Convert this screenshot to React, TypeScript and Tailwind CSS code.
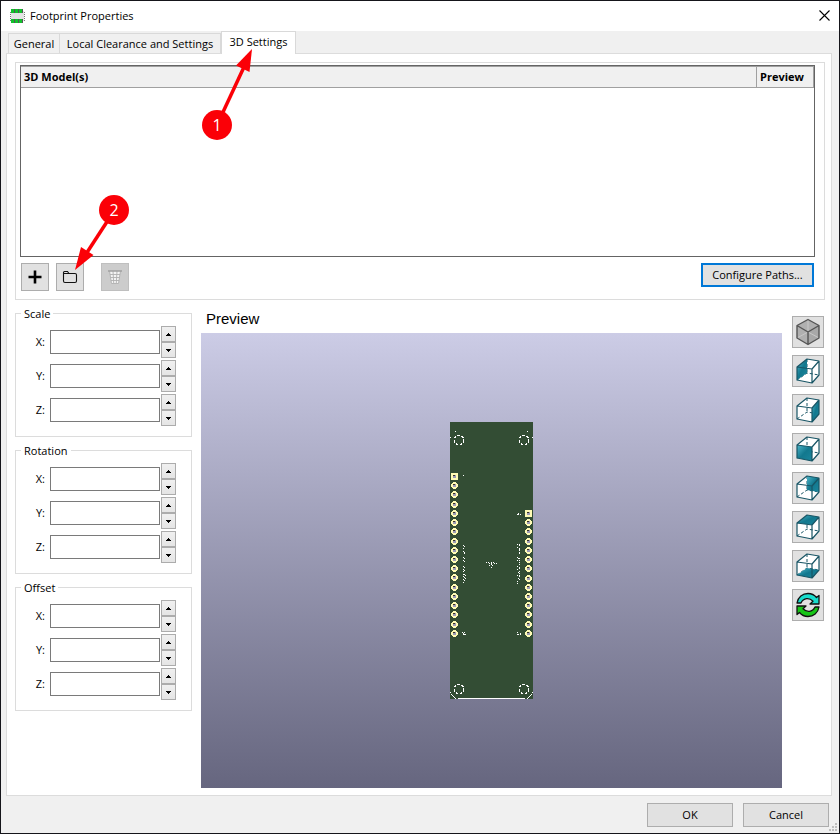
import React from "react";

type Point = [number, number];

const FTL: Point = [5, 12];
const FTR: Point = [20, 14];
const FBR: Point = [20, 28];
const FBL: Point = [5, 25];
const BTL: Point = [15, 4];
const BTR: Point = [27, 6];
const BBR: Point = [27, 20];
const BBL: Point = [15, 18];

const faces: Record<string, Point[]> = {
  Left: [FTL, BTL, BBL, FBL],
  Right: [FTR, BTR, BBR, FBR],
  Front: [FTL, FTR, FBR, FBL],
  Back: [BTL, BTR, BBR, BBL],
  Top: [FTL, BTL, BTR, FTR],
  Bottom: [FBL, BBL, BBR, FBR],
};

const pts = (list: Point[]) => list.map((p) => p.join(",")).join(" ");

function CubeIcon({ face }: { face: string }) {
  const id = `shade-${face}`;
  return (
    <svg viewBox="1 1 30 30" className="h-[30px] w-[30px]" aria-hidden="true">
      <defs>
        <linearGradient id={id} x1="0" y1="0" x2="1" y2="1">
          <stop offset="0" stopColor="#4db4c8" />
          <stop offset="0.5" stopColor="#12788e" />
          <stop offset="1" stopColor="#1c869c" />
        </linearGradient>
      </defs>
      <polygon points={pts([FTL, BTL, BTR, BBR, FBR, FBL])} fill="#fff" />
      <path
        d="M15 4V18M5 25L15 18L27 20"
        fill="none"
        stroke="#185565"
        strokeWidth="1"
        strokeDasharray="3 2"
      />
      <polygon points={pts(faces[face])} fill={`url(#${id})`} />
      <path
        d="M5 12L15 4L27 6V20L20 28L5 25ZM5 12L20 14L27 6M20 14V28"
        fill="none"
        stroke="#185565"
        strokeWidth="1.2"
        strokeLinejoin="round"
      />
    </svg>
  );
}

function IsoIcon() {
  return (
    <svg viewBox="1 1 30 30" className="h-[30px] w-[30px]" aria-hidden="true">
      <path d="M16 3.500L27 9.500V22L16 28.500L5 22V9.500Z" fill="#b0b0b0" />
      <path d="M16 16L27 9.500V22L16 28.500Z" fill="#a8a8a8" />
      <path d="M16 4V16M5 22L16 16L27 22" stroke="#c8c8c8" strokeWidth="1" fill="none" />
      <path
        d="M16 3.500L27 9.500V22L16 28.500L5 22V9.500ZM5 9.500L16 16L27 9.500M16 16V28.500"
        fill="none"
        stroke="#555"
        strokeWidth="1.400"
        strokeLinejoin="round"
      />
    </svg>
  );
}

function RefreshIcon() {
  return (
    <svg viewBox="1 1 30 30" className="h-[30px] w-[30px]" aria-hidden="true">
      <g stroke="#111" strokeWidth="1.300" strokeLinejoin="round">
        <path
          d="M5 14C6 8 10.500 4.500 16 4.500C19.500 4.500 22.500 6 24.500 8.500L27 6.500V15H18L21 12.200C17.500 8.500 11.500 8.500 9 14Z"
          fill="#19dccd"
        />
        <path
          d="M27 18C26 24 21.500 27.500 16 27.500C12.500 27.500 9.500 26 7.500 23.500L5 25.500V17H14L11 19.800C14.500 23.500 20.500 23.500 23 18Z"
          fill="#17c517"
        />
      </g>
    </svg>
  );
}

function FootprintLogo() {
  return (
    <svg viewBox="0 0 15 14" className="h-[14px] w-[15px]" shapeRendering="crispEdges" aria-hidden="true">
      <rect x="1" y="2" width="13" height="10" fill="#e4e4e4" />
      <path d="M.5 3V12M14.500 3V12" stroke="#777" strokeDasharray="1 1" />
      {[1, 5, 9].map((x) => (
        <g key={x}>
          <rect x={x} y="0" width="4" height="4" fill="#555" />
          <rect x={x} y="0" width="3" height="4" fill="#12c22c" />
          <rect x={x} y="10" width="4" height="4" fill="#555" />
          <rect x={x} y="10" width="3" height="4" fill="#12c22c" />
        </g>
      ))}
    </svg>
  );
}

function Pad({ x, y, square }: { x: number; y: number; square?: boolean }) {
  return (
    <g>
      {square ? (
        <rect x={x - 3} y={y - 3} width="7" height="7" fill="#fffbb5" />
      ) : (
        <path
          d={`M${x - 1} ${y - 3}h3v1h1v1h1v3h-1v1h-1v1h-3v-1h-1v-1h-1v-3h1v-1h1z`}
          fill="#fffbb5"
        />
      )}
      <rect x={x - 1} y={y - 1} width="3" height="3" fill="#9c9bb5" />
      <rect x={x - 1} y={y - 1} width="2" height="1" fill="#3a3520" />
    </g>
  );
}

const silk: Point[] = [
  [13, 53],
  [13, 123], [14, 124], [13, 126], [13, 129], [14, 130], [14, 131], [13, 135], [14, 136], [13, 138], [14, 139],
  [13, 144], [14, 145], [13, 147], [14, 148], [13, 149], [13, 152], [14, 152], [15, 153], [13, 154], [14, 155],
  [15, 156], [13, 157], [14, 158], [13, 160],
  [67, 122], [69, 122], [69, 123], [67, 125], [69, 126], [69, 127], [69, 128], [69, 130], [69, 131], [67, 135],
  [68, 136], [69, 136], [67, 138], [69, 138], [69, 140], [69, 142], [67, 144], [69, 145], [69, 146], [67, 147],
  [69, 149], [68, 150], [69, 151], [67, 153], [69, 153], [69, 154], [68, 156], [69, 157], [67, 159], [67, 161],
  [36, 140], [38, 140], [39, 141], [41, 140], [41, 141], [41, 142], [42, 143], [43, 140], [46, 141], [44, 141],
  [39, 143], [41, 145],
  [68, 91], [67, 92], [68, 92], [70, 92],
  [12, 210], [13, 211], [13, 212], [14, 210], [14, 212], [15, 212],
  [67, 210], [67, 212], [68, 212], [70, 211], [70, 212],
  [5, 9], [77, 9], [0, 15], [82, 15],
  [0, 270], [1, 272], [2, 273], [3, 274], [4, 275], [5, 276],
  [82, 270], [81, 272], [80, 273], [79, 274], [78, 275], [77, 276],
];

function Board() {
  return (
    <svg viewBox="0 0 83 277" className="h-[277px] w-[83px]" shapeRendering="crispEdges" role="img" aria-label="Board">
      <rect width="83" height="277" fill="#334d34" />
      {[[9, 18], [74, 18], [9, 267], [74, 267]].map(([cx, cy]) => (
        <circle
          key={`${cx}-${cy}`}
          cx={cx}
          cy={cy}
          r="4.700"
          fill="none"
          stroke="#fff"
          strokeDasharray="2.500 1.500"
        />
      ))}
      {Array.from({ length: 18 }, (_, i) => (
        <Pad key={i} x={4} y={Math.round(54 + i * 9.22)} square={i === 0} />
      ))}
      {Array.from({ length: 14 }, (_, i) => (
        <Pad key={i} x={78} y={Math.round(91 + i * 9.22)} square={i === 0} />
      ))}
      {silk.map(([x, y], i) => (
        <rect key={i} x={x} y={y} width="1" height="1" fill="#fff" />
      ))}
      <rect x="8" y="276" width="67" height="1" fill="#fff" />
    </svg>
  );
}

function Spinner({ group, axis }: { group: string; axis: string }) {
  const id = `${group}-${axis}`.toLowerCase();
  const button =
    "flex h-4 w-full items-center justify-center border border-[#acacac] bg-linear-to-b from-[#f0f0f0] to-[#e5e5e5]";
  return (
    <div className="flex h-8 items-center">
      <label htmlFor={id} className="w-[30px] pr-px text-right">
        {axis}:
      </label>
      <input id={id} type="text" className="ml-1 h-6 w-[110px] border border-[#7a7a7a] bg-white px-1 outline-none" />
      <div className="ml-px w-[15px]">
        <button type="button" aria-label={`Increase ${group} ${axis}`} className={button}>
          <svg viewBox="0 0 5 3" className="h-[3px] w-[5px]" shapeRendering="crispEdges">
            <path d="M2 0h1v1h1v1h1v1H0V2h1V1h1z" />
          </svg>
        </button>
        <button type="button" aria-label={`Decrease ${group} ${axis}`} className={button}>
          <svg viewBox="0 0 5 3" className="h-[3px] w-[5px]" shapeRendering="crispEdges">
            <path d="M0 0h5v1H4v1H3v1H2V2H1V1H0z" />
          </svg>
        </button>
      </div>
    </div>
  );
}

function AxisGroup({ title }: { title: string }) {
  return (
    <fieldset className="border border-[#dcdcdc] pt-[5px] pb-[10px]">
      <legend className="ml-[5px] px-[3px] leading-[15px]">{title}</legend>
      <div className="flex flex-col gap-[2px]">
        {["X", "Y", "Z"].map((axis) => (
          <Spinner key={axis} group={title} axis={axis} />
        ))}
      </div>
    </fieldset>
  );
}

function Callouts() {
  const badge =
    "absolute flex h-[30px] w-[30px] items-center justify-center rounded-full bg-[#fb0007] font-['Open_Sans',sans-serif] text-base text-white";
  return (
    <div className="pointer-events-none absolute -top-px -left-px">
      <svg width="300" height="300" viewBox="0 0 300 300" aria-hidden="true">
        <g stroke="#fb0007" strokeWidth="3.500" fill="#fb0007">
          <path d="M217 125L244 67" />
          <path d="M252 49L249.500 72L236 65.500Z" stroke="none" />
          <path d="M114 211L86 254" />
          <path d="M75 270L81 247L93.500 255Z" stroke="none" />
        </g>
      </svg>
      <span className={`${badge} top-[110px] left-[202px]`}>1</span>
      <span className={`${badge} top-[195px] left-[99px]`}>2</span>
    </div>
  );
}

const views = ["Left", "Right", "Front", "Back", "Top", "Bottom"];

export default function App() {
  const push = "border border-[#adadad] bg-[#e1e1e1]";
  const tool = `${push} flex h-7 w-7 items-center justify-center`;
  const view = `${push} flex h-8 w-8 items-center justify-center`;
  const tab = "h-5 border border-b-0 border-[#d9d9d9] bg-[#f0f0f0]";
  return (
    <div className="relative flex min-h-screen flex-col border border-[#15151a] bg-[#f0f0f0] font-['Open_Sans','Noto_Sans',sans-serif] text-[11px] leading-4 text-black">
      <header className="flex h-[30px] items-center bg-white pr-[9px] pb-px pl-[9px]">
        <FootprintLogo />
        <h1 className="ml-[5px] flex-1">Footprint Properties</h1>
        <button type="button" aria-label="Close">
          <svg viewBox="0 0 11 11" className="h-[11px] w-[11px]">
            <path d="M.5 .5L10.500 10.500M10.500 .5L.5 10.500" stroke="#000" strokeWidth="1.100" />
          </svg>
        </button>
      </header>

      <nav role="tablist" className="flex h-[22px] items-end pl-[7px]">
        <button type="button" role="tab" aria-selected="false" className={`${tab} w-[52px]`}>
          General
        </button>
        <button type="button" role="tab" aria-selected="false" className={`${tab} w-[161px] border-l-0`}>
          Local Clearance and Settings
        </button>
        <button
          type="button"
          role="tab"
          aria-selected="true"
          className="relative -mb-px h-[23px] w-[75px] border border-b-0 border-[#d9d9d9] bg-white pb-[2px]"
        >
          3D Settings
        </button>
      </nav>

      <main className="mr-[7px] ml-[5px] flex flex-1 flex-col border border-[#dcdcdc] bg-white pt-2 pr-[6px] pb-[7px] pl-2">
        <section className="border border-[#dcdcdc] pt-[2px] pr-[9px] pb-2 pl-1">
          <div className="h-48 border border-[#646464]">
            <table className="w-full border-collapse border-t border-[#a0a0a0]">
              <thead>
                <tr className="h-[21px] border-b border-[#a0a0a0] bg-[#f0f0f0] text-left">
                  <th className="border-r border-[#a0a0a0] px-[3px] font-bold">3D Model(s)</th>
                  <th className="w-[57px] border-r border-[#a0a0a0] px-[3px] font-bold">Preview</th>
                </tr>
              </thead>
              <tbody />
            </table>
          </div>
          <div className="mt-[6px] flex items-start px-px">
            <button type="button" aria-label="Add model" className={tool}>
              <svg viewBox="0 0 14 14" className="h-[14px] w-[14px]">
                <path d="M7 .5V13.500M.5 7H13.500" stroke="#000" strokeWidth="2.600" />
              </svg>
            </button>
            <button type="button" aria-label="Browse models" className={`${tool} ml-[7px]`}>
              <svg viewBox="0 0 16 14" className="h-[14px] w-4">
                <path
                  d="M1.500 4.500V11Q1.500 12.500 3 12.500H13Q14.500 12.500 14.500 11V5Q14.500 3.500 13 3.500H7L5.500 1.500H2.500Q1.500 1.500 1.500 2.500ZM1.500 3.500H7"
                  fill="none"
                  stroke="#111"
                  strokeWidth="1.100"
                />
              </svg>
            </button>
            <button
              type="button"
              disabled
              aria-label="Delete model"
              className="ml-[17px] flex h-7 w-7 items-center justify-center border border-[#bfbfbf] bg-[#cccccc]"
            >
              <svg viewBox="0 0 14 14" className="h-[14px] w-[14px]">
                <path d="M1.500 1H12.500L10.500 13.500H3.500Z" fill="#f4f4f4" />
                <path
                  d="M5 1L5.700 13M9 1L8.300 13M2 4.500H12M2.500 7.500H11.500M3 10.500H11M1.500 1L3.500 13.500H10.500L12.500 1"
                  fill="none"
                  stroke="#b0b0b0"
                  strokeWidth=".9"
                />
                <path d="M0 1H14" stroke="#a0a0a0" strokeWidth="1.500" />
              </svg>
            </button>
            <button
              type="button"
              className="ml-auto h-6 w-[113px] border-2 border-[#0078d7] bg-[#e1e1e1]"
            >
              Configure Paths...
            </button>
          </div>
        </section>

        <div className="mt-[6px] flex flex-1 gap-[9px] pr-px">
          <div className="flex w-[177px] flex-col gap-[6px]">
            <AxisGroup title="Scale" />
            <AxisGroup title="Rotation" />
            <AxisGroup title="Offset" />
          </div>
          <section className="flex flex-1 flex-col">
            <h2 className="pb-px pl-[5px] font-['Liberation_Sans',Arial,sans-serif] text-[15px] leading-[26px]">
              Preview
            </h2>
            <div className="flex flex-1 items-center justify-center bg-linear-to-b from-[#cccce6] to-[#66667f]">
              <Board />
            </div>
          </section>
          <div className="ml-px flex flex-col gap-[7px] pt-[10px]">
            <button type="button" aria-label="Isometric view" className={view}>
              <IsoIcon />
            </button>
            {views.map((face) => (
              <button key={face} type="button" aria-label={`${face} view`} className={view}>
                <CubeIcon face={face} />
              </button>
            ))}
            <button type="button" aria-label="Reload" className={view}>
              <RefreshIcon />
            </button>
          </div>
        </div>
      </main>

      <footer className="relative flex justify-end gap-[10px] pt-[7px] pr-[10px] pb-[6px]">
        <button type="button" className={`${push} h-6 w-[86px]`}>
          OK
        </button>
        <button type="button" className={`${push} h-6 w-[86px]`}>
          Cancel
        </button>
        <svg
          viewBox="0 0 8 8"
          className="absolute right-[2px] bottom-[2px] h-2 w-2"
          shapeRendering="crispEdges"
          aria-hidden="true"
        >
          <path d="M6 0h2v2H6zM3 3h2v2H3zM6 3h2v2H6zM0 6h2v2H0zM3 6h2v2H3zM6 6h2v2H6z" fill="#bfbfbf" />
        </svg>
      </footer>
      <Callouts />
    </div>
  );
}
